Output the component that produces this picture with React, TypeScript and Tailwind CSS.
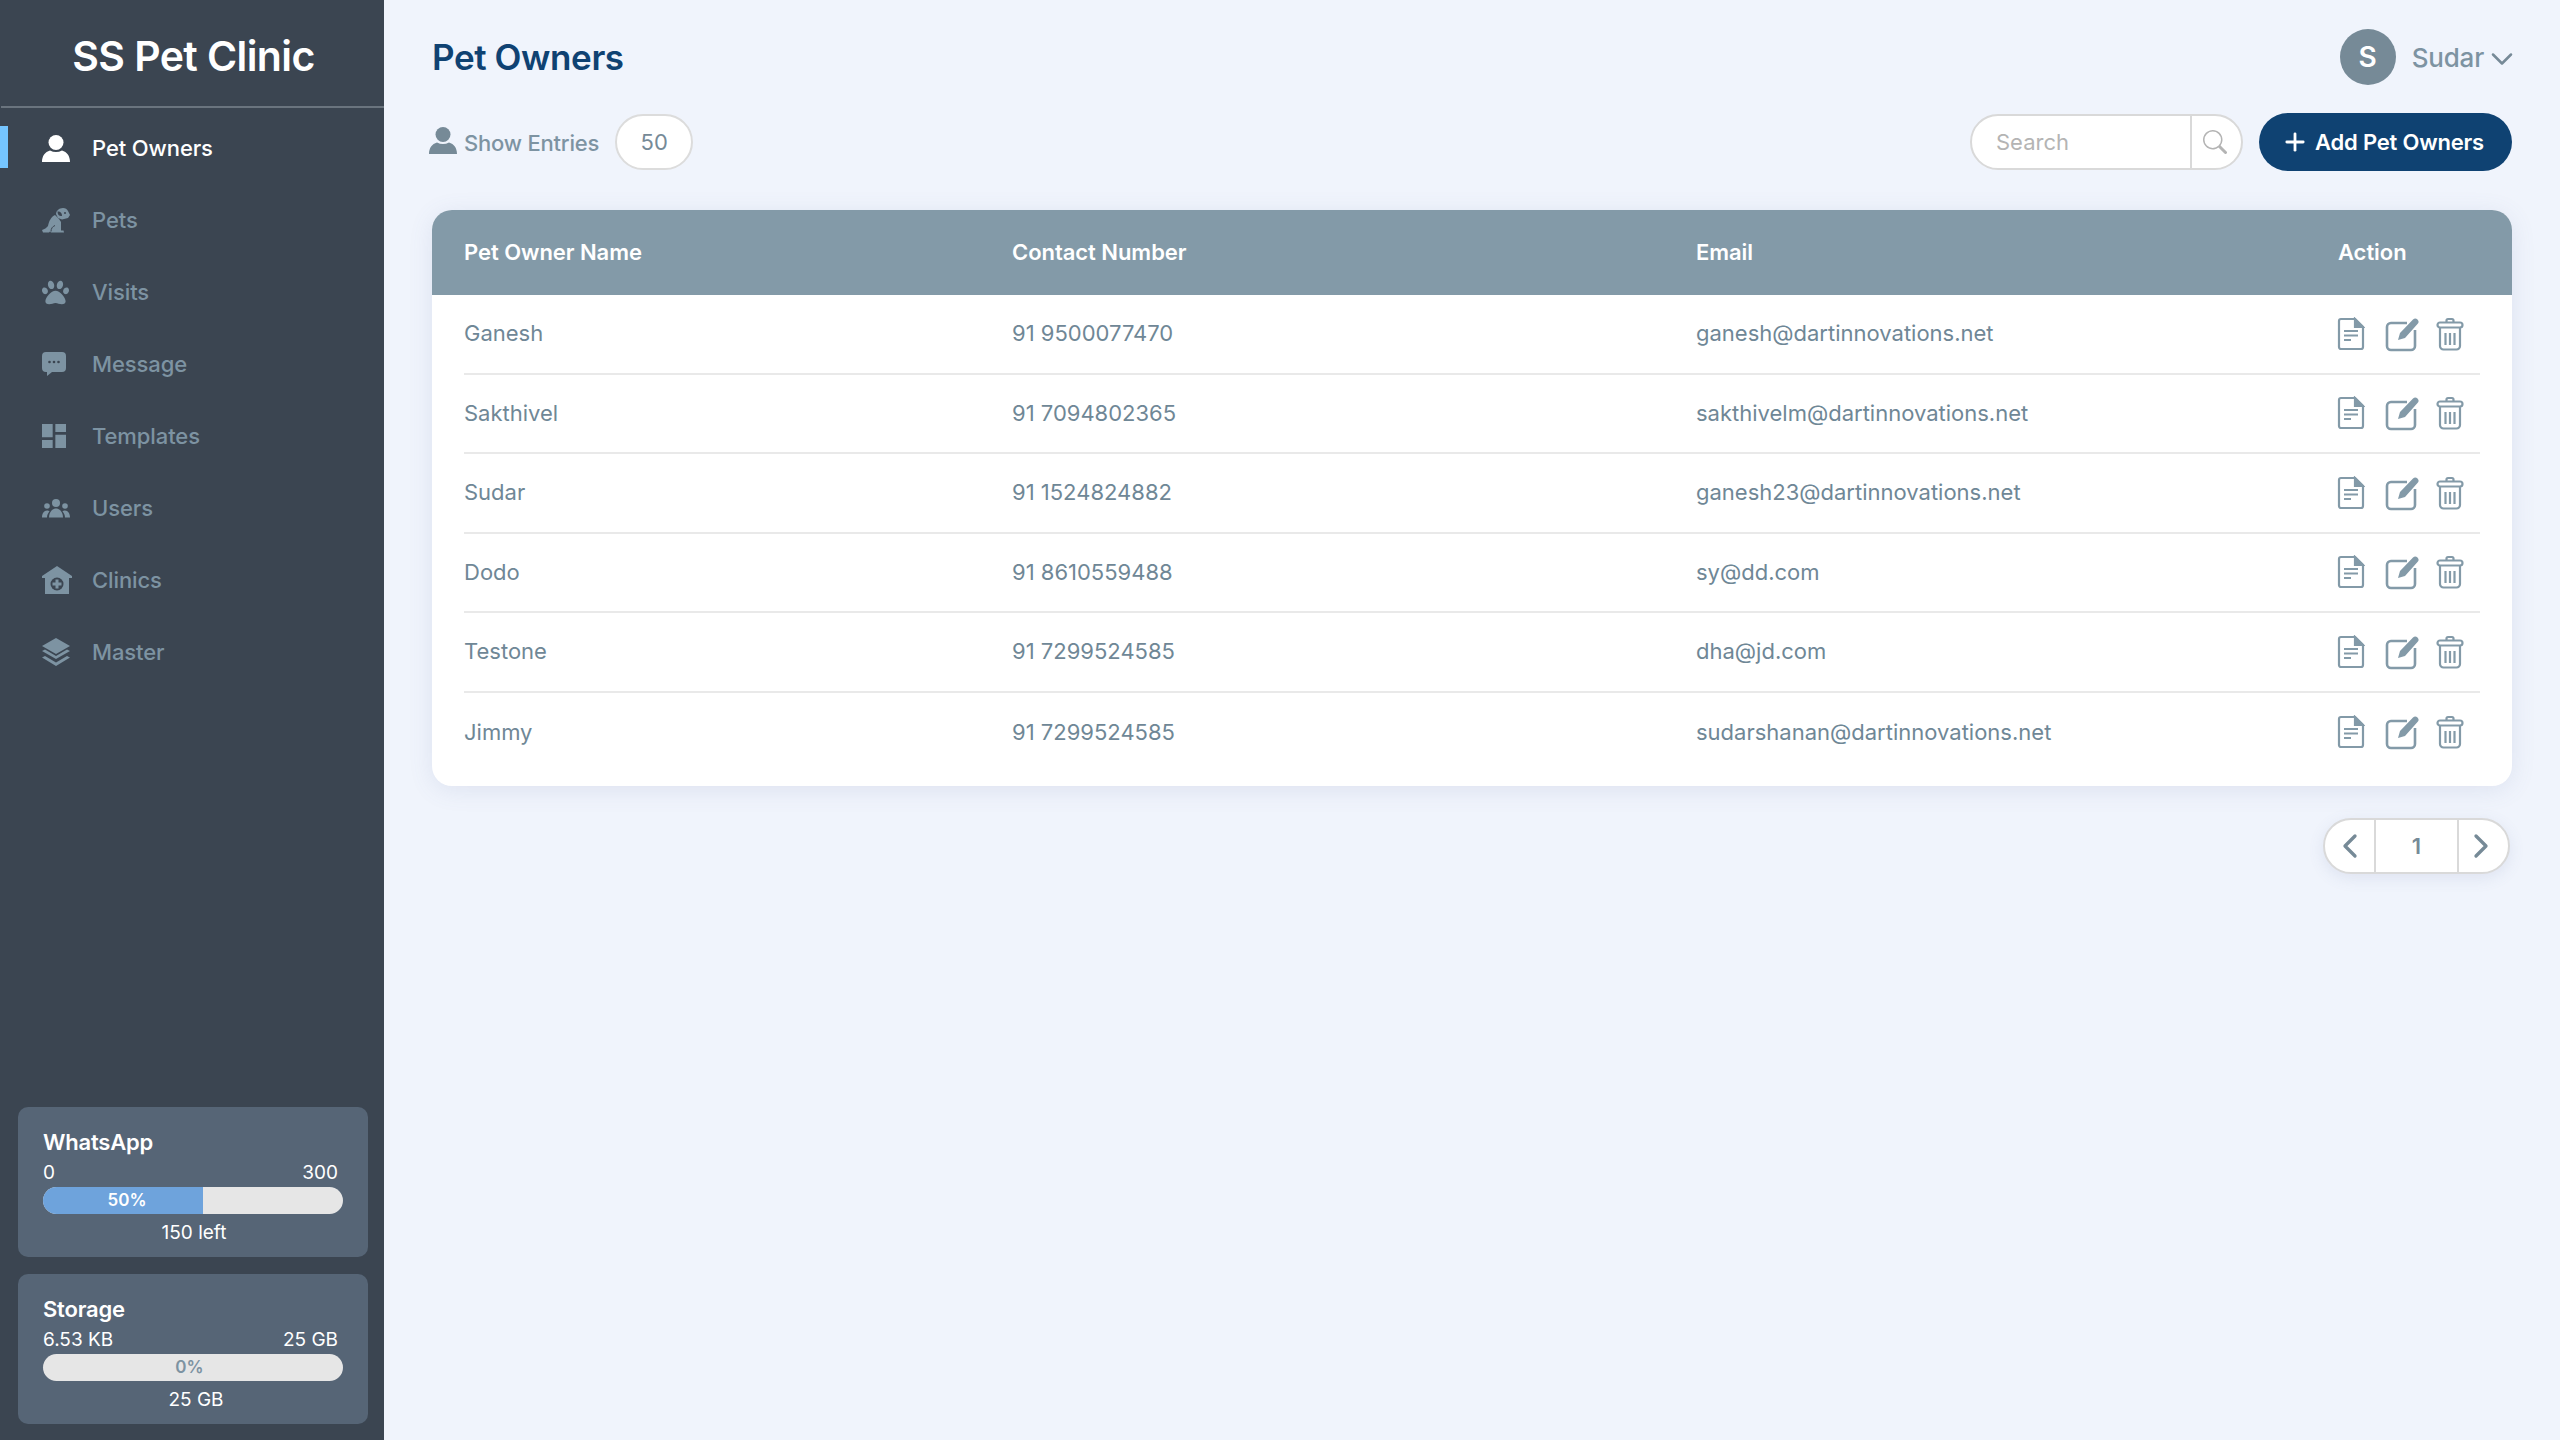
import React from 'react';
import { BsSearch } from 'react-icons/bs';
import { FaPaw } from 'react-icons/fa';
import { MdDashboard } from 'react-icons/md';
import { ChevronDown, ChevronLeft, ChevronRight, Plus } from 'lucide-react';

const SIDEBAR_BG = '#3b4551';

const PersonIcon = () => (
  <svg width="28" height="27" viewBox="0 0 28 27" fill="currentColor">
    <circle cx="14" cy="7.500" r="7.500" />
    <path d="M0 27c0-6 3-10 8-11.500q6 3 12 0c5 1.500 8 5.500 8 11.500z" />
  </svg>
);

const DogIcon = () => (
  <svg width="28" height="25" viewBox="0 0 28 25" fill="currentColor">
    <path d="M13 7C9 9 7 13 6 18c-1.500 2-3.500 3-6 4l1 2.500h6l1-1 1 1h13l-.5-2h-2.500V14l-2-3z" />
    <path d="M14 6c0-3 3-6 7-6 2.500 0 4 1 5 3l2 4-2 3-6 1.500-4-1.500z" />
    <path d="M15.500 3.500c2.500-.5 4.500 1 4.500 4.500-2.500.5-4.500-1-4.500-4.500z" fill={SIDEBAR_BG} />
    <circle cx="23" cy="5" r="1" fill={SIDEBAR_BG} />
    <path d="M9 23.500c0-3 1.500-5 4-6" fill="none" stroke={SIDEBAR_BG} strokeWidth="1" />
  </svg>
);

const MessageIcon = () => (
  <svg width="24" height="24" viewBox="0 0 24 24" fill="currentColor">
    <path d="M4 0h16a4 4 0 0 1 4 4v12a4 4 0 0 1-4 4H10l-5 4v-4H4a4 4 0 0 1-4-4V4a4 4 0 0 1 4-4z" />
    <circle cx="7.500" cy="10" r="1.300" fill={SIDEBAR_BG} />
    <circle cx="12" cy="10" r="1.300" fill={SIDEBAR_BG} />
    <circle cx="16.500" cy="10" r="1.300" fill={SIDEBAR_BG} />
  </svg>
);

const UsersIcon = () => (
  <svg width="28" height="19" viewBox="0 0 28 19" fill="currentColor">
    <circle cx="14" cy="4" r="4" />
    <circle cx="5" cy="7" r="2.800" />
    <circle cx="23" cy="7" r="2.800" />
    <path d="M7 18.500c0-5 3-9 7-9s7 4 7 9z" />
    <path d="M0 18.500c0-4 2-7 5-7 1 0 2 .3 2.500 1-1.500 1.500-2.500 3.500-2.500 6z" />
    <path d="M28 18.500c0-4-2-7-5-7-1 0-2 .3-2.500 1 1.500 1.500 2.500 3.500 2.500 6z" />
  </svg>
);

const ClinicIcon = () => (
  <svg width="30" height="28" viewBox="0 0 30 28" fill="currentColor">
    <path d="M15 0l15 10v2h-3v16H3V12H0v-2z" />
    <circle cx="15" cy="18" r="6.500" fill={SIDEBAR_BG} />
    <path d="M13.500 13.500h3v3h3v3h-3v3h-3v-3h-3v-3h3z" />
  </svg>
);

const MasterIcon = () => (
  <svg width="28" height="28" viewBox="0 0 28 28" fill="currentColor">
    <path d="M14 0l14 8-14 8L0 8z" />
    <path d="M0 13l3-1.500 11 6.500 11-6.500 3 1.500-14 8z" />
    <path d="M0 19.500L3 18l11 6.500L25 18l3 1.500L14 28z" />
  </svg>
);

const navItems = [
  { label: 'Pet Owners', icon: <PersonIcon />, active: true },
  { label: 'Pets', icon: <DogIcon /> },
  { label: 'Visits', icon: <FaPaw size={27} /> },
  { label: 'Message', icon: <MessageIcon /> },
  { label: 'Templates', icon: <MdDashboard size={32} className="-ml-[4px]" /> },
  { label: 'Users', icon: <UsersIcon /> },
  { label: 'Clinics', icon: <ClinicIcon /> },
  { label: 'Master', icon: <MasterIcon /> },
];

const owners = [
  { name: 'Ganesh', phone: '91 9500077470', email: 'ganesh@dartinnovations.net' },
  { name: 'Sakthivel', phone: '91 7094802365', email: 'sakthivelm@dartinnovations.net' },
  { name: 'Sudar', phone: '91 1524824882', email: 'ganesh23@dartinnovations.net' },
  { name: 'Dodo', phone: '91 8610559488', email: 'sy@dd.com' },
  { name: 'Testone', phone: '91 7299524585', email: 'dha@jd.com' },
  { name: 'Jimmy', phone: '91 7299524585', email: 'sudarshanan@dartinnovations.net' },
];

const DocIcon = () => (
  <svg width="28" height="34" viewBox="0 0 28 34" fill="none" stroke="#839aa8" strokeWidth="2.200">
    <path d="M4 2h14l8 8v20a2 2 0 0 1-2 2H4a2 2 0 0 1-2-2V4a2 2 0 0 1 2-2z" />
    <path d="M18 2l8 8h-8z" fill="#839aa8" />
    <path d="M7 14h14M7 18.500h14M7 23h7" strokeWidth="1.800" />
  </svg>
);

const EditIcon = () => (
  <svg width="36" height="36" viewBox="0 0 36 36" fill="none">
    <path d="M22 7H6a4 4 0 0 0-4 4v19a4 4 0 0 0 4 4h20a4 4 0 0 0 4-4V14" stroke="#839aa8" strokeWidth="2.600" />
    <path d="M13 24l2-7L28 3.500a3.200 3.200 0 0 1 4.500 0 3.200 3.200 0 0 1 0 4.500L20 22z" fill="#839aa8" />
  </svg>
);

const TrashIcon = () => (
  <svg width="28" height="34" viewBox="0 0 28 34" fill="none" stroke="#839aa8" strokeWidth="2.200">
    <path d="M10.500 5V3.500a1.500 1.500 0 0 1 1.500-1.500h4a1.500 1.500 0 0 1 1.500 1.500V5" />
    <rect x="1.500" y="5.500" width="25" height="5" rx="2.500" />
    <path d="M4 11v18a3.500 3.500 0 0 0 3.500 3.500h13A3.500 3.500 0 0 0 24 29V11" />
    <path d="M9.500 16v12M14 16v12M18.500 16v12" />
  </svg>
);

interface UsageCardProps {
  title: string;
  min: string;
  max: string;
  percent: number;
  percentLabel: string;
  footer: string;
  footerClass: string;
}

const UsageCard = ({ title, min, max, percent, percentLabel, footer, footerClass }: UsageCardProps) => (
  <div className="h-[150px] rounded-[10px] bg-[#566576] px-[25px] pt-[22px] text-white">
    <div className="text-[22px] leading-[26px] font-semibold tracking-[-0.2px]">{title}</div>
    <div className="mt-[6px] flex justify-between pr-[5px] text-[19px] leading-[24px]">
      <span>{min}</span>
      <span>{max}</span>
    </div>
    <div className="relative mt-[2px] flex h-[27px] overflow-hidden rounded-full bg-[#e6e6e6]">
      {percent > 0 && <div className="h-full bg-[#6ea3dc]" style={{ width: `${percent}%` }} />}
      <span className={`absolute inset-y-0 left-0 flex items-center justify-center text-[17px] font-semibold ${percent > 0 ? 'w-[168px] text-white' : 'w-[293px] text-[#7d93a2]'}`}>
        {percentLabel}
      </span>
    </div>
    <div className={`mt-[7px] text-center text-[19px] leading-[24px] ${footerClass}`}>{footer}</div>
  </div>
);

export default function App() {
  return (
    <div className="flex min-h-screen bg-[#f0f4fc] font-['Inter',sans-serif]">
      <aside className="flex h-[1440px] w-[384px] shrink-0 flex-col justify-between bg-[#3b4551]">
        <div>
          <div className="ml-px flex h-[108px] items-center justify-center border-b-2 border-[#6a747e] pt-[8px] pl-[2px] text-[41px] font-semibold tracking-[-0.6px] text-white">
            SS Pet Clinic
          </div>
          <nav className="pt-[4px]">
            {navItems.map(({ label, icon, active }) => (
              <div key={label} className={`relative flex h-[72px] items-center pl-[42px] text-[22px] font-medium ${active ? 'text-white' : 'text-[#7d93a2]'}`}>
                {active && <div className="absolute left-0 top-[14px] h-[42px] w-[8px] bg-[#75c5ff]" />}
                <span className="flex w-[50px] items-center">{icon}</span>
                <span className="tracking-[-0.1px]">{label}</span>
              </div>
            ))}
          </nav>
        </div>
        <div className="flex flex-col gap-[17px] pb-[16px] pl-[18px] pr-[16px]">
          <UsageCard title="WhatsApp" min="0" max="300" percent={53.3} percentLabel="50%" footer="150 left" footerClass="pl-[2px]" />
          <UsageCard title="Storage" min="6.53 KB" max="25 GB" percent={0} percentLabel="0%" footer="25 GB" footerClass="pl-[6px]" />
        </div>
      </aside>

      <main className="min-w-0 flex-1 px-[48px]">
        <div className="flex h-[113px] items-start justify-between">
          <h1 className="pt-[35px] text-[35px] leading-[44px] font-semibold tracking-[-0.4px] text-[#0f4272]">Pet Owners</h1>
          <div className="flex items-center pt-[29px]">
            <div className="flex h-[56px] w-[56px] items-center justify-center rounded-full bg-[#768a97] text-[28px] font-semibold text-white">S</div>
            <span className="ml-[16px] text-[26px] font-medium tracking-[-0.2px] text-[#7d93a2]">Sudar</span>
            <ChevronDown size={36} strokeWidth={1.7} className="mt-[3px] -mr-[8px] text-[#768a97]" />
          </div>
        </div>

        <div className="flex h-[58px] items-center justify-between">
          <div className="flex items-center">
            <span className="-ml-[3px] -mt-[3px] text-[#768a97]">
              <PersonIcon />
            </span>
            <span className="ml-[7px] mt-[2px] text-[22px] font-medium tracking-[-0.2px] text-[#7d93a2]">Show Entries</span>
            <div className="ml-[16px] flex h-[56px] w-[78px] items-center justify-center rounded-full border-2 border-[#dcdcdc] bg-white text-[22px] text-[#768a97]">50</div>
          </div>
          <div className="flex items-center">
            <div className="flex h-[56px] w-[273px] items-center rounded-full border-2 border-[#d9d9d9] bg-white">
              <span className="w-[218px] pl-[24px] text-[22px] text-[#b4b4b4]">Search</span>
              <span className="flex h-full flex-1 items-center justify-center border-l-2 border-[#d9d9d9] pr-[3px]">
                <BsSearch size={24} className="text-[#b4b4b4]" />
              </span>
            </div>
            <button className="ml-[16px] flex h-[58px] w-[253px] items-center justify-center rounded-full bg-[#0f4272] text-[22px] font-semibold tracking-[-0.2px] text-white">
              <Plus size={28} strokeWidth={2.4} className="-ml-[6px] mr-[6px]" />
              Add Pet Owners
            </button>
          </div>
        </div>

        <div className="mt-[39px] h-[576px] overflow-hidden rounded-[20px] bg-white shadow-[0_4px_24px_rgba(90,110,160,0.12)]">
          <div className="grid h-[85px] grid-cols-[548px_684px_642px_1fr] items-center bg-[#839aa8] px-[32px] text-[22px] font-semibold tracking-[-0.05px] text-white">
            <div>Pet Owner Name</div>
            <div>Contact Number</div>
            <div>Email</div>
            <div>Action</div>
          </div>
          <div className="mx-[32px]">
            {owners.map((o, i) => (
              <div key={o.name} className={`grid h-[79.5px] grid-cols-[548px_684px_642px_1fr] items-center text-[22px] text-[#6f8796] ${i < owners.length - 1 ? 'border-b-2 border-[#e9e9e9]' : ''}`}>
                <div>{o.name}</div>
                <div>{o.phone}</div>
                <div>{o.email}</div>
                <div className="-ml-px flex items-center">
                  <DocIcon />
                  <span className="ml-[20px] mr-[15px] flex">
                    <EditIcon />
                  </span>
                  <TrashIcon />
                </div>
              </div>
            ))}
          </div>
        </div>

        <div className="mt-[32px] flex justify-end pr-[2px]">
          <div className="flex h-[56px] w-[187px] items-center rounded-full border-2 border-[#d9d9d9] bg-white text-[#768a97] shadow-[0_4px_16px_rgba(90,110,160,0.12)]">
            <span className="flex h-full w-[49px] items-center justify-center">
              <ChevronLeft size={40} strokeWidth={2} />
            </span>
            <span className="flex h-full flex-1 items-center justify-center border-x-2 border-[#d9d9d9] text-[22px] font-semibold">1</span>
            <span className="flex h-full w-[49px] items-center justify-center pr-[5px]">
              <ChevronRight size={40} strokeWidth={2} />
            </span>
          </div>
        </div>
      </main>
    </div>
  );
}
